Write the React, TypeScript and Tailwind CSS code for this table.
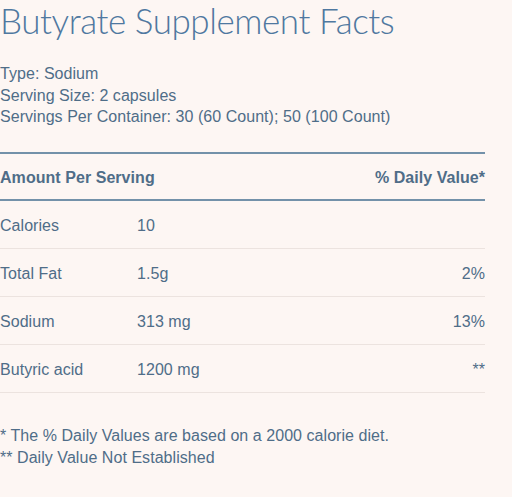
import React from "react";

const rows = [
  { name: "Calories", amount: "10", dv: "" },
  { name: "Total Fat", amount: "1.5g", dv: "2%" },
  { name: "Sodium", amount: "313 mg", dv: "13%" },
  { name: "Butyric acid", amount: "1200 mg", dv: "**" },
];

export default function App() {
  return (
    <div
      className="w-[512px] h-[497px] bg-[#fdf6f3] text-[#4f6d88] overflow-hidden tracking-[0.05px]"
      style={{ fontFamily: '"Liberation Sans", Arial, sans-serif' }}
    >
      <h1
        className="text-[35px] leading-[40px] font-light text-[#4f78a0] tracking-[-0.45px]"
        style={{ fontFamily: 'Lato, "Open Sans", sans-serif' }}
      >
        Butyrate Supplement Facts
      </h1>
      <div className="mt-[23px] text-[16px] leading-[21.5px]">
        <div>Type: Sodium</div>
        <div>Serving Size: 2 capsules</div>
        <div>Servings Per Container: 30 (60 Count); 50 (100 Count)</div>
      </div>
      <div className="w-[485px] mt-[24px] border-t-2 border-[#7391a9]">
        <div className="flex justify-between items-center h-[47px] pt-[3px] border-b-2 border-[#7391a9] text-[16px] font-bold">
          <span>Amount Per Serving</span>
          <span>% Daily Value*</span>
        </div>
        {rows.map((r) => (
          <div
            key={r.name}
            className="flex items-center h-[48px] pt-[3px] border-b border-[#ece3df] text-[16px]"
          >
            <span className="w-[137px]">{r.name}</span>
            <span className="flex-1">{r.amount}</span>
            <span>{r.dv}</span>
          </div>
        ))}
      </div>
      <div className="mt-[32px] text-[16px] leading-[22px]">
        <div>* The % Daily Values are based on a 2000 calorie diet.</div>
        <div>** Daily Value Not Established</div>
      </div>
    </div>
  );
}
